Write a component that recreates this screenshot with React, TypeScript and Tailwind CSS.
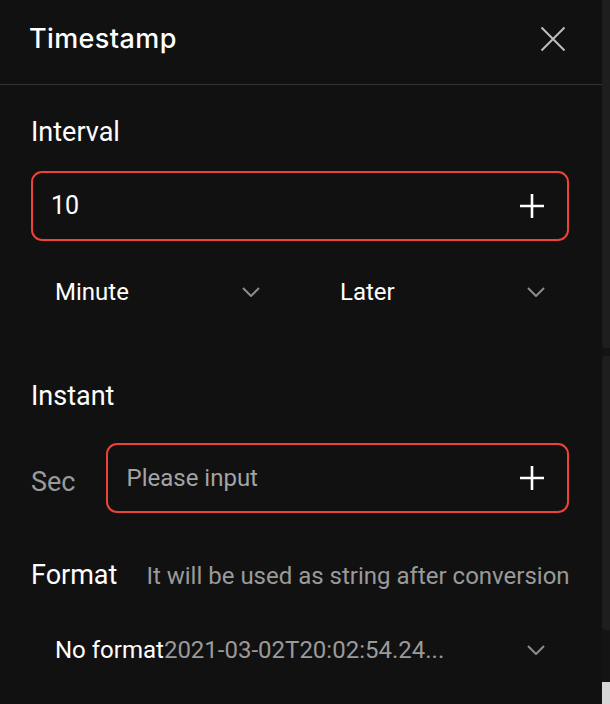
import { useState } from 'react'

const ROBOTO = "font-['Roboto',sans-serif]"

function PlusIcon() {
  return (
    <svg width="26" height="26" viewBox="0 0 26 26" fill="none" stroke="#ffffff" strokeWidth="2.6">
      <path d="M13 1v24M1 13h24" />
    </svg>
  )
}

function Chevron() {
  return (
    <svg width="18" height="10" viewBox="0 0 18 10" fill="none" stroke="#8c8c8c" strokeWidth="2">
      <path d="M1 1l8 8 8-8" />
    </svg>
  )
}

function SelectBox({ label, sub }: { label: string; sub?: string }) {
  return (
    <div className="flex h-12 items-center justify-between pl-6 pr-6">
      <span className="whitespace-nowrap text-[24px] leading-8 text-white">
        {label}
        {sub && <span className="text-[#9a9a9a]">{sub}</span>}
      </span>
      <Chevron />
    </div>
  )
}

function NumberInput({ value, placeholder }: { value?: string; placeholder?: string }) {
  return (
    <div className="flex h-[70px] flex-1 items-center justify-between rounded-[11px] border-2 border-[#ec4237] pl-[18px] pr-[22px]">
      {value ? (
        <span className="text-[25px] leading-8 text-white">{value}</span>
      ) : (
        <span className="text-[24px] leading-8 text-[#a3a3a3]">{placeholder}</span>
      )}
      <PlusIcon />
    </div>
  )
}

export default function App() {
  const [open] = useState(true)

  return (
    <div className={`flex h-[704px] w-[610px] overflow-hidden bg-[#111111] ${ROBOTO}`}>
      {open && (
        <div className="flex w-[602px] flex-col rounded-tl-[4px] bg-[#111111]">
          {/* Header */}
          <div className="flex h-[85px] shrink-0 items-start justify-between border-b border-[#333333] pl-[29px] pr-[36px] pt-[23px]">
            <h1 className="font-['Inter',sans-serif] text-[27px] font-medium leading-8 tracking-[0.4px] text-white">
              Timestamp
            </h1>
            <svg width="26" height="26" viewBox="0 0 26 26" fill="none" stroke="#bdbdbd" strokeWidth="2" className="mt-[3px]">
              <path d="M1.5 1.5l23 23M24.5 1.5l-23 23" />
            </svg>
          </div>

          <div className="flex flex-col pl-[31px] pr-[33px]">
            {/* Interval */}
            <h2 className="mt-[31px] text-[27px] leading-8 text-white">Interval</h2>
            <div className="mt-[23px] flex">
              <NumberInput value="10" />
            </div>
            <div className="mt-[27px] grid grid-cols-2 gap-8">
              <SelectBox label="Minute" />
              <SelectBox label="Later" />
            </div>

            {/* Instant */}
            <h2 className="mt-[64px] text-[27px] leading-8 text-white">Instant</h2>
            <div className="mt-[31px] flex items-center gap-[31px]">
              <span className="pt-[8px] text-[27px] leading-8 text-[#9a9a9a]">Sec</span>
              <NumberInput placeholder="Please input" />
            </div>

            {/* Format */}
            <div className="mt-[46px] flex items-baseline gap-[29px] whitespace-nowrap">
              <h2 className="text-[27px] leading-8 text-white">Format</h2>
              <span className="text-[24px] leading-8 text-[#9a9a9a]">It will be used as string after conversion</span>
            </div>
            <div className="mt-[34px]">
              <SelectBox label="No format" sub="2021-03-02T20:02:54.24..." />
            </div>
          </div>
        </div>
      )}

      {/* page scrollbar behind the drawer */}
      <div className="flex w-2 flex-col bg-[#141414]">
        <div className="h-[348px] rounded-bl-[4px] bg-[#1e1e1e]" />
        <div className="mt-[8px] h-[274px] rounded-l-[4px] bg-[#1e1e1e]" />
        <div className="mt-[52px] flex-1 bg-[#d6d6d6]" />
      </div>
    </div>
  )
}
